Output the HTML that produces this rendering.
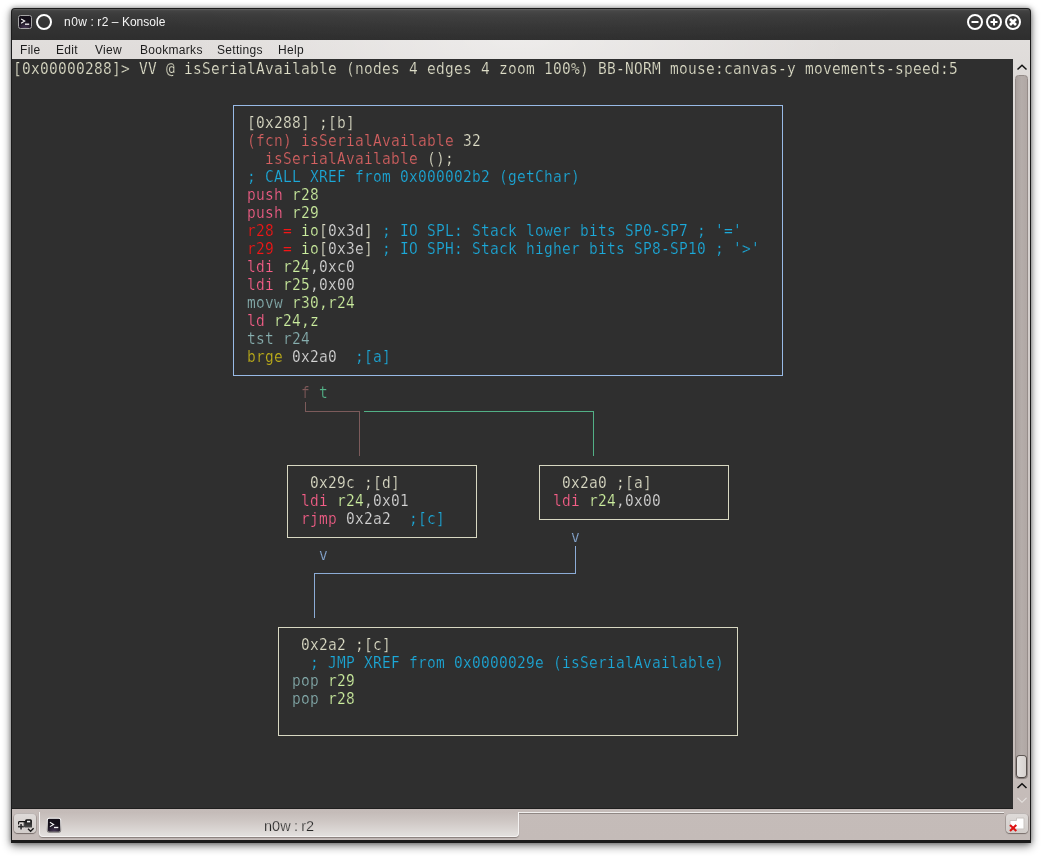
<!DOCTYPE html>
<html><head><meta charset="utf-8"><title>n0w : r2 – Konsole</title>
<style>
html,body{margin:0;padding:0;background:#fff;}
body{width:1042px;height:857px;position:relative;overflow:hidden;font-family:"Liberation Sans","DejaVu Sans",sans-serif;}
div,span,svg{position:absolute;}
.ln span,#ttext span{position:static;}
.tt1{letter-spacing:.5px;word-spacing:-.9px;}
#win{left:11px;top:8px;width:1020px;height:835px;background:#1b1b1b;border-radius:4px 4px 0 0;box-shadow:0 3px 10px rgba(0,0,0,.48),0 0 5px rgba(0,0,0,.38);}
#title{left:12px;top:9px;width:1018px;height:31px;border-radius:3px 3px 0 0;background:radial-gradient(ellipse 400px 40px at 50% 0,rgba(255,255,255,.035),rgba(255,255,255,0)),linear-gradient(#6a6a6a 0,#4a4a4a 1px,#424242 2px,#3c3c3c 5px,#383838 9px,#323232 20px,#2e2e2e 31px);}
#ttext{left:64px;top:14px;font-size:12px;line-height:16px;letter-spacing:0;color:#f4f4f4;white-space:pre;will-change:transform;}
#body{left:12px;top:40px;width:1018px;height:800px;background:radial-gradient(ellipse 330px 90px at 50% 0,rgba(255,255,255,.42),rgba(255,255,255,.22) 50%,rgba(255,255,255,0) 100%),linear-gradient(#e1dedc 0,#dedad8 40px,#c6bdba 700px,#c4bbb8 800px);}
#menu{left:12px;top:40px;width:1018px;height:19px;}
#menu span{top:2px;font-size:12px;line-height:16px;letter-spacing:.3px;color:#1c1c1c;will-change:transform;}
#term{left:12px;top:59px;width:1001px;height:750px;background:#2f2f2f;box-shadow:0 -1px 0 #1f1f1f inset;}
#trough{left:1015px;top:75px;width:13px;height:704px;box-sizing:border-box;border:1px solid #958c89;border-radius:3.5px;background:linear-gradient(90deg,#a9a09d,#b5adaa 50%,#b0a7a4);}
#handle{left:1017px;top:756px;width:9px;height:21px;border-radius:3px;background:linear-gradient(90deg,#e6e3e1,#d6d1ce);box-shadow:0 0 0 1px rgba(60,52,50,.7),0 1px 2px rgba(0,0,0,.45);}
#tab{left:39px;top:812px;width:480px;height:25px;box-sizing:border-box;border:1px solid #f4f2f1;border-top:none;border-radius:0 0 4px 4px;background:linear-gradient(#c4bbb8,#cfc8c5 40%,#e3e0de);box-shadow:0 1px 1px rgba(60,50,48,.45);}
#tabline{left:519px;top:812px;width:485px;height:1px;background:#f0eeed;box-shadow:0 1px 0 #8f8784;}
#tabl2{left:39px;top:810px;width:1px;height:4px;background:#ece9e8;}
#tabtxt{left:263.6px;top:817px;font-size:14.5px;line-height:18px;letter-spacing:0;word-spacing:-.7px;color:#262626;-webkit-text-stroke:.25px #d6d0cd;white-space:pre;will-change:transform;}
.btn{border-radius:4px;background:linear-gradient(#dedad8,#d2cdca);box-shadow:0 0 0 1px rgba(110,100,96,.32),0 1px 1px rgba(70,60,56,.55),0 -1px 0 rgba(255,255,255,.5);}
.ln{white-space:pre;font-family:"DejaVu Sans Mono","Liberation Mono",monospace;font-size:14.5px;letter-spacing:0.27px;line-height:18px;height:18px;color:#dedec8;will-change:transform;transform-origin:0 14.5px;transform:scaleY(1.05);-webkit-text-stroke:.2px #2f2f2f;}
.bx{border:1px solid;box-sizing:content-box;}
.d{color:#dedec8}.f{color:#d46161}.c{color:#1ca9d9}.p{color:#f55f88}.g{color:#ccee9f}.r{color:#f41616}.n{color:#d6d6d6}
.t{color:#87afaf}.y{color:#c0b01a}.fr{color:#805a5a}.tg{color:#54b489}.v{color:#88a9d3}
</style></head><body>
<div id="win"></div>
<div id="title"></div>
<!-- title icons -->
<svg style="left:17px;top:14px" width="16" height="16" viewBox="0 0 16 16"><rect x="1.5" y="1.5" width="13" height="13" rx="2" fill="url(#pg)" stroke="#a5a5a5" stroke-width="1"/><path d="M4.1 4.9 L7.7 7 L4.1 9.2" fill="none" stroke="#f4f4f4" stroke-width="1.1"/><path d="M8 10.2 H12.2" stroke="#f4f4f4" stroke-width="1.3"/></svg>
<svg style="left:35px;top:13px" width="18" height="18" viewBox="0 0 18 18"><circle cx="9" cy="9" r="7" fill="none" stroke="#fff" stroke-width="2"/></svg>
<div id="ttext"><span class="tt1">n0w : r2 – </span>Konsole</div>
<svg style="left:966px;top:13px" width="56" height="18" viewBox="0 0 56 18">
<g fill="none" stroke="#fff" stroke-width="2"><circle cx="9" cy="9" r="7"/><circle cx="28" cy="9" r="7"/><circle cx="47" cy="9" r="7"/>
<path d="M5.5 9 H12.5"/><path d="M24.5 9 H31.5 M28 5.5 V12.5"/><path d="M44 6 L50 12 M50 6 L44 12" stroke-width="2.6"/></g></svg>
<div id="body"></div>
<div id="menu"><span style="left:8px">File</span><span style="left:44px">Edit</span><span style="left:83px">View</span><span style="left:128px">Bookmarks</span><span style="left:205px">Settings</span><span style="left:266px">Help</span></div>
<div id="term"></div>
<!-- scrollbar -->
<svg style="left:1014px;top:62px" width="16" height="10" viewBox="0 0 16 10"><path d="M3.5 7.5 L8 3.2 L12.5 7.5" fill="none" stroke="#111" stroke-width="1.5"/></svg>
<div id="trough"></div>
<div id="handle"></div>
<svg style="left:1014px;top:781px" width="16" height="24" viewBox="0 0 16 24"><path d="M3.5 7 L8 2.7 L12.5 7" fill="none" stroke="#111" stroke-width="1.5"/><path d="M3.5 16.8 L8 21.3 L12.5 16.8" fill="none" stroke="#e6e2e0" stroke-width="1.1"/></svg>
<!-- tab bar -->
<div id="tab"></div><div id="tabline"></div>
<div class="btn" style="left:14px;top:814px;width:22px;height:19px"></div>
<svg style="left:14px;top:814px" width="22" height="19" viewBox="0 0 22 19"><defs><linearGradient id="tg" x1="0" y1="0" x2="0" y2="1"><stop offset="0" stop-color="#0c0c0c"/><stop offset="1" stop-color="#4c4c4c"/></linearGradient></defs>
<path d="M9.6 7.6 H11 V13.3 H9.6 Z" fill="#454545"/>
<path d="M11 13.4 V6.8 Q11 5.2 12.6 5.2 H16.4 Q18 5.2 18 6.8 V13.4 Z" fill="url(#tg)"/>
<rect x="13" y="6.8" width="3.2" height="1.6" fill="#f1f1f1"/>
<path d="M4.6 10.4 V8.4 Q4.6 7.6 5.6 7.6 H11.2" fill="none" stroke="#111" stroke-width="1.1"/>
<path d="M4 12.65 H9.8 M7.05 10.1 V15.4" stroke="#f3f1f0" stroke-width="2.9" opacity=".55"/>
<path d="M4 12.65 H9.8 M7.05 10.1 V15.4" stroke="#2e2e2e" stroke-width="1.6"/>
<path d="M14 14.7 L16.6 17.3 L19.6 14.3" fill="none" stroke="#161616" stroke-width="1.3"/></svg>
<svg style="left:46px;top:817px" width="16" height="17" viewBox="0 0 16 17"><defs><linearGradient id="ig" x1="0" y1="0" x2="0" y2="1"><stop offset="0" stop-color="#fafafa"/><stop offset=".5" stop-color="#c9c6c6"/><stop offset="1" stop-color="#7d7a7a"/></linearGradient><radialGradient id="pg" cx=".5" cy="1" r=".6"><stop offset="0" stop-color="#4a3a58"/><stop offset="1" stop-color="#15101a"/></radialGradient></defs><rect x="1.3" y="1.2" width="13.4" height="13.9" rx="2" fill="url(#pg)" stroke="url(#ig)" stroke-width="1.1"/><path d="M3.9 5.3 L7.6 7.4 L3.9 9.6" fill="none" stroke="#f4f4f4" stroke-width="1.1"/><path d="M8 10.5 H12.3" stroke="#f4f4f4" stroke-width="1.3"/></svg>
<div id="tabtxt">n0w : r2</div>
<div class="btn" style="left:1006px;top:814px;width:22px;height:19px"></div>
<svg style="left:1007px;top:815px" width="20" height="18" viewBox="0 0 20 18"><path d="M3 5.5 H9.5 V3 H17 V14 H3 Z" fill="#fff" stroke="#c9c4c1" stroke-width="1"/><path d="M3 10 L9.3 16 M9.3 10 L3 16" stroke="#de1212" stroke-width="2.1"/></svg>
<div class="bx" style="left:233px;top:105px;width:548px;height:269px;border-color:#98bae6"></div>
<div class="bx" style="left:287px;top:465px;width:188px;height:71px;border-color:#d8d8c2"></div>
<div class="bx" style="left:539px;top:465px;width:188px;height:53px;border-color:#d8d8c2"></div>
<div class="bx" style="left:278px;top:627px;width:458px;height:107px;border-color:#d8d8c2"></div>
<div class="sl" style="left:305px;top:402px;width:1px;height:10px;background:#7c5b5b"></div>
<div class="sl" style="left:305px;top:411px;width:55px;height:1px;background:#7c5b5b"></div>
<div class="sl" style="left:359px;top:411px;width:1px;height:45px;background:#7c5b5b"></div>
<div class="sl" style="left:364px;top:411px;width:230px;height:1px;background:#52b086"></div>
<div class="sl" style="left:593px;top:411px;width:1px;height:45px;background:#52b086"></div>
<div class="sl" style="left:575px;top:546px;width:1px;height:28px;background:#8cacd6"></div>
<div class="sl" style="left:314px;top:573px;width:262px;height:1px;background:#8cacd6"></div>
<div class="sl" style="left:314px;top:573px;width:1px;height:45px;background:#8cacd6"></div>
<div class="ln" style="left:13px;top:60px"><span class="d">[0x00000288]&gt; VV @ isSerialAvailable (nodes 4 edges 4 zoom 100%) BB-NORM mouse:canvas-y movements-speed:5</span></div>
<div class="ln" style="left:247px;top:114px"><span class="d">[0x288] ;[b]</span></div>
<div class="ln" style="left:247px;top:132px"><span class="f">(fcn) isSerialAvailable</span><span class="d"> 32</span></div>
<div class="ln" style="left:247px;top:150px"><span class="f">  isSerialAvailable</span><span class="d"> ();</span></div>
<div class="ln" style="left:247px;top:168px"><span class="c">; CALL XREF from 0x000002b2 (getChar)</span></div>
<div class="ln" style="left:247px;top:186px"><span class="p">push</span><span class="g"> r28</span></div>
<div class="ln" style="left:247px;top:204px"><span class="p">push</span><span class="g"> r29</span></div>
<div class="ln" style="left:247px;top:222px"><span class="r">r28 =</span><span class="g"> io</span><span class="d">[</span><span class="n">0x3d</span><span class="d">]</span><span class="c"> ; IO SPL: Stack lower bits SP0-SP7 ; '='</span></div>
<div class="ln" style="left:247px;top:240px"><span class="r">r29 =</span><span class="g"> io</span><span class="d">[</span><span class="n">0x3e</span><span class="d">]</span><span class="c"> ; IO SPH: Stack higher bits SP8-SP10 ; '&gt;'</span></div>
<div class="ln" style="left:247px;top:258px"><span class="p">ldi</span><span class="g"> r24</span><span class="n">,0xc0</span></div>
<div class="ln" style="left:247px;top:276px"><span class="p">ldi</span><span class="g"> r25</span><span class="n">,0x00</span></div>
<div class="ln" style="left:247px;top:294px"><span class="t">movw</span><span class="g"> r30,r24</span></div>
<div class="ln" style="left:247px;top:312px"><span class="p">ld</span><span class="g"> r24,z</span></div>
<div class="ln" style="left:247px;top:330px"><span class="t">tst r24</span></div>
<div class="ln" style="left:247px;top:348px"><span class="y">brge</span><span class="n"> 0x2a0</span><span class="c">  ;[a]</span></div>
<div class="ln" style="left:301px;top:384px"><span class="fr">f</span> <span class="tg">t</span></div>
<div class="ln" style="left:301px;top:474px"><span class="d"> 0x29c ;[d]</span></div>
<div class="ln" style="left:553px;top:474px"><span class="d"> 0x2a0 ;[a]</span></div>
<div class="ln" style="left:301px;top:492px"><span class="p">ldi</span><span class="g"> r24</span><span class="n">,0x01</span></div>
<div class="ln" style="left:553px;top:492px"><span class="p">ldi</span><span class="g"> r24</span><span class="n">,0x00</span></div>
<div class="ln" style="left:301px;top:510px"><span class="p">rjmp</span><span class="n"> 0x2a2</span><span class="c">  ;[c]</span></div>
<div class="ln" style="left:571px;top:528px"><span class="v">v</span></div>
<div class="ln" style="left:319px;top:546px"><span class="v">v</span></div>
<div class="ln" style="left:292px;top:636px"><span class="d"> 0x2a2 ;[c]</span></div>
<div class="ln" style="left:292px;top:654px"><span class="c">  ; JMP XREF from 0x0000029e (isSerialAvailable)</span></div>
<div class="ln" style="left:292px;top:672px"><span class="t">pop</span><span class="g"> r29</span></div>
<div class="ln" style="left:292px;top:690px"><span class="t">pop</span><span class="g"> r28</span></div>
</body></html>
